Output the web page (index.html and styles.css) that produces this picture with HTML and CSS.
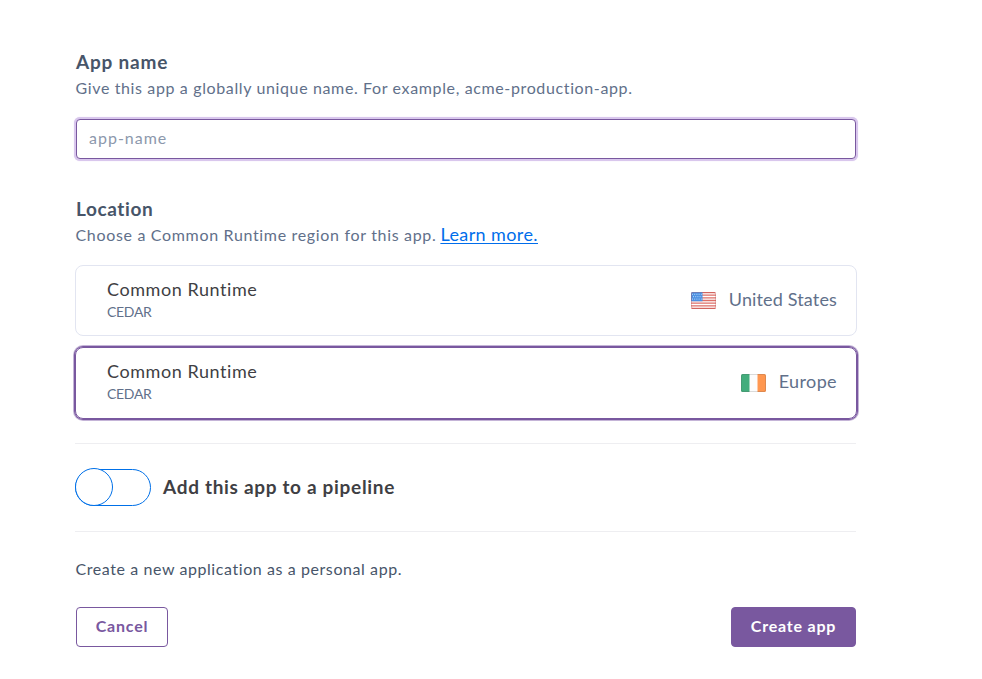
FILE: index.html
```html
<!DOCTYPE html>
<html lang="en">
<head>
<meta charset="utf-8">
<title>Create new app</title>
<link rel="stylesheet" href="styles.css">
</head>
<body>
<main class="form">
  <section class="field">
    <h2 class="label">App name</h2>
    <p class="hint"><span>Give this app a globally unique name. For example, acme-production-app.</span></p>
    <input class="input" type="text" placeholder="app-name" aria-label="App name">
  </section>
  <section class="field location">
    <h2 class="label label-location">Location</h2>
    <p class="hint hint-region"><span>Choose a Common Runtime region for this app.</span><a class="link" href="#">Learn more.</a></p>
    <div class="regions">
      <div class="region">
        <div class="runtime"><span class="runtime-name">Common Runtime</span><span class="stack">CEDAR</span></div>
        <div class="country us">
          <svg class="flag" width="26" height="18" viewBox="0 0 26 18" aria-hidden="true">
            <defs><clipPath id="us"><rect x="0" y="0" width="25" height="17" rx="1.5"/></clipPath></defs>
            <g clip-path="url(#us)"><path fill="#fff" d="M0 0h26v18H0z"/>
            <path stroke="#dd6f68" stroke-width="1.3" d="M0 .6h26M0 3.2h26M0 5.8h26M0 8.5h26M0 11.1h26M0 13.8h26M0 16.4h26"/>
            <path fill="#4d91e2" d="M0 0h11.5v9.2H0z"/>
            <path stroke="#b9d8fa" stroke-dasharray="1 1.2" d="M1 2.3h10M2 4.7h9M1 7.1h10"/></g>
            <rect x=".5" y=".5" width="24" height="16" rx="1.5" fill="none" stroke="#b84d4d" stroke-opacity=".3"/>
          </svg>
          <span>United States</span>
        </div>
      </div>
      <div class="region selected">
        <div class="runtime"><span class="runtime-name">Common Runtime</span><span class="stack">CEDAR</span></div>
        <div class="country eu">
          <svg class="flag" width="26" height="18" viewBox="0 0 26 18" aria-hidden="true">
            <defs><clipPath id="ie"><rect x="0" y="0" width="25" height="18" rx="1.5"/></clipPath></defs>
            <g clip-path="url(#ie)"><path fill="#fcfcfc" d="M0 0h26v18H0z"/><path fill="#43ad7c" d="M0 0h8.5v18H0z"/><path fill="#ff9750" d="M16.5 0h9v18h-9z"/></g>
            <rect x=".5" y=".5" width="24" height="17" rx="1.5" fill="none" stroke="#555" stroke-opacity=".2"/>
          </svg>
          <span>Europe</span>
        </div>
      </div>
    </div>
  </section>
  <label class="pipeline"><span class="toggle"><span class="knob"></span></span><span class="pipeline-text">Add this app to a pipeline</span></label>
  <p class="owner">Create a new application as a personal app.</p>
  <div class="actions">
    <button class="button cancel">Cancel</button>
    <button class="button create">Create app</button>
  </div>
</main>
</body>
</html>
```
FILE: styles.css
```css
* { box-sizing: border-box; }
body { margin: 0; background: #fff; font-family: Lato, "Open Sans", sans-serif; font-size: 16px; color: #475569; }
h2, p { margin: 0; }
.form { width: 782px; margin-left: 75px; padding-top: 49px; }
.label { padding-left: 1px; font-size: 19px; line-height: 26px; font-weight: 700; color: #475569; letter-spacing: .8px; }
.label-location { letter-spacing: .6px; }
.hint { display: flex; gap: 4px; padding-left: .5px; line-height: 26px; color: #61708a; white-space: nowrap; letter-spacing: .63px; }
.hint-region { letter-spacing: .67px; }
.input { display: block; width: 780px; height: 40px; margin: 18px 0 0 1px; padding: 0 12px 3px; border: 1px solid #79589f; border-radius: 4px; outline: 0; box-shadow: 0 0 0 2px #d9c7ed, 0 0 1px 2px #d9c7ed; font: inherit; letter-spacing: 1px; }
.input::placeholder { color: #8c98ac; opacity: 1; }
.location { margin-top: 37px; }
.link { color: #006deb; font-size: 18px; text-decoration: underline; text-underline-offset: 2px; letter-spacing: .4px; line-height: 24px; }
.regions { display: grid; gap: 11px; margin-top: 17px; }
.region { display: flex; justify-content: space-between; height: 71px; padding: 0 19px 0 31px; border: 1px solid #e2e5f1; border-radius: 8px; }
.selected { height: 72px; border-color: #79589f; box-shadow: 0 0 0 1px #79589f, 0 0 0 2px #c4b4d7; }
.runtime { display: flex; flex-direction: column; padding-top: 11px; }
.runtime-name { font-size: 18px; line-height: 24px; color: #3f3f44; letter-spacing: .57px; }
.stack { font-size: 14px; line-height: 21px; color: #61708a; letter-spacing: -.3px; }
.country { display: flex; align-items: center; gap: 12px; font-size: 18px; color: #61708a; height: 66px; letter-spacing: .22px; }
.us { letter-spacing: .15px; }
.eu { letter-spacing: .38px; }
.flag { margin-top: 4px; }
.pipeline { display: flex; align-items: center; height: 89px; margin: 24px 1px 0 0; border-top: 1px solid #eeeef1; border-bottom: 1px solid #eeeef1; gap: 12px; }
.toggle { width: 76px; height: 37px; border: 1px solid #0070e8; border-radius: 19px; }
.knob { display: block; width: 38px; height: 38px; margin: -2px 0 0 -1px; border: 1px solid #0070e8; border-radius: 50%; background: #fff; }
.pipeline-text { margin-top: -3px; font-size: 19px; font-weight: 700; color: #3f3f44; letter-spacing: .68px; }
.owner { margin: 24px 0 0 .5px; line-height: 26px; letter-spacing: .58px; }
.actions { display: flex; justify-content: space-between; margin: 25px 1px 0; }
.button { height: 40px; padding: 0 0 3px; border: 1px solid #79589f; border-radius: 4px; font: 700 16px Lato, sans-serif; letter-spacing: .8px; }
.cancel { width: 92px; background: #fff; color: #79589f; }
.create { width: 125px; background: #79589f; color: #fff; }
```
